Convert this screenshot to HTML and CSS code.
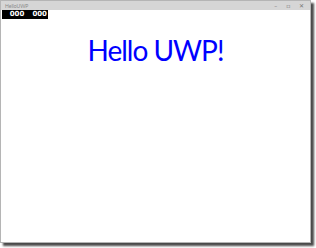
FILE: index.html
```html
<!DOCTYPE html>
<html>
<head>
  <title>HelloUWP</title>
  <link rel="stylesheet" href="styles.css">
</head>
<body>

  <div class="window">
    <div class="titlebar">
      <span class="title">HelloUWP</span>
      <div class="controls">
        <span class="ctl">&#8211;</span>
        <span class="ctl">&#9633;</span>
        <span class="ctl">&#10005;</span>
      </div>
    </div>

    <div class="content">
      <div class="counter"><span>000</span><span>000</span></div>
      <h1 class="hello">Hello UWP!</h1>
    </div>
  </div>

</body>
</html>
```

FILE: styles.css
```css
html, body {
  margin: 0;
  background: #fff;
}

body {
  width: 316px;
  height: 248px;
  font-family: "Lato", "Open Sans", sans-serif;
}

.window {
  width: 309px;
  height: 241px;
  border: 1px solid #b5b5b5;
  background: #fff;
  box-shadow: 3px 3px 2px #4a4a4a;
  display: flex;
  flex-direction: column;
}

.titlebar {
  height: 9px;
  background: #d6d6d6;
  display: flex;
  align-items: center;
  justify-content: space-between;
  padding: 0 4px;
}

.title {
  font-size: 5px;
  color: #8a8a8a;
}

.controls {
  display: flex;
  gap: 9px;
  font-size: 6px;
  color: #777;
  padding-right: 2px;
}

.content {
  position: relative;
  flex: 1;
}

.counter {
  position: absolute;
  top: 0;
  left: 1px;
  width: 46px;
  height: 9px;
  background: #000;
  color: #fff;
  font-family: "DejaVu Sans", sans-serif;
  font-weight: bold;
  font-size: 7px;
  line-height: 9px;
  display: flex;
  justify-content: flex-end;
  gap: 8px;
  padding-right: 1px;
  box-sizing: border-box;
}

.hello {
  margin: 23px 0 0;
  text-align: center;
  font-weight: normal;
  font-size: 28px;
  letter-spacing: -1px;
  color: #0000ff;
}
```
